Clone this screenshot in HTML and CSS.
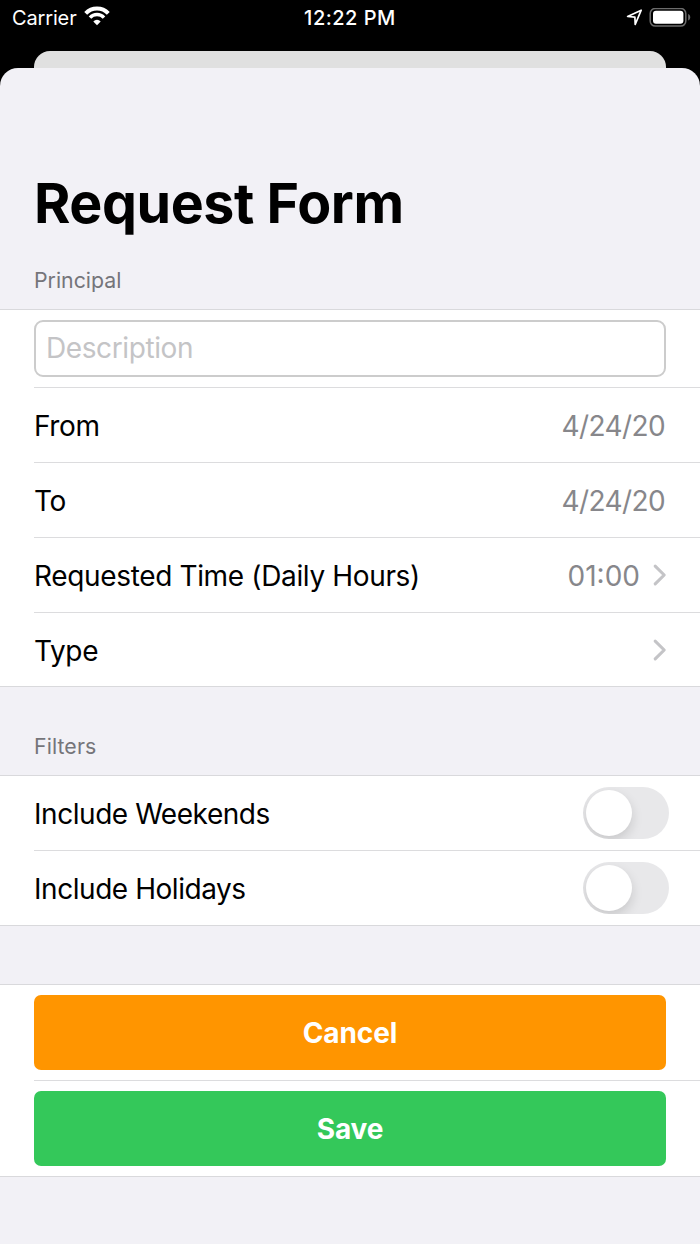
FILE: index.html
```html
<!DOCTYPE html>
<html lang="en">
<head>
<meta charset="utf-8">
<title>Request Form</title>
<link rel="stylesheet" href="styles.css">
</head>
<body>
<header class="status">
  <div class="status-left">
    <span class="carrier">Carrier</span>
    <svg class="wifi" width="26" height="20" viewBox="0 0 26 20">
      <path d="M1.700 7.300a15.600 15.600 0 0 1 22.600 0" fill="none" stroke="#fff" stroke-width="4"/>
      <path d="M6 11.600a9.700 9.700 0 0 1 14 0" fill="none" stroke="#fff" stroke-width="3.500"/>
      <path d="M13 19.200l-3.700-3.800a5.200 5.200 0 0 1 7.400 0z" fill="#fff"/>
    </svg>
  </div>
  <span class="clock">12:22 PM</span>
  <div class="status-right">
    <svg width="17" height="17" viewBox="0 0 17 17"><path d="M15.200 1.200L1.600 7.500l7.300.7.300 7.300z" fill="none" stroke="#fff" stroke-width="1.700" stroke-linejoin="round"/></svg>
    <svg width="42" height="20" viewBox="0 0 42 20">
      <rect x="1.200" y=".5" width="35.600" height="17.600" rx="5" fill="none" stroke="#6c6c6c" stroke-width="1.500"/>
      <rect x="4" y="2.800" width="30.400" height="13" rx="3" fill="#fff"/>
      <path d="M39.200 6.100c1.300.5 2 1.600 2 3.100s-.7 2.700-2 3.200z" fill="#6c6c6c"/>
    </svg>
  </div>
</header>
<div class="behind"></div>
<main class="sheet">
  <h1 class="title">Request Form</h1>
  <h2 class="section-label">Principal</h2>
  <section class="group">
    <div class="row row-field"><input class="field" type="text" placeholder="Description"></div>
    <div class="row"><span>From</span><span class="value date">4/24/20</span></div>
    <div class="row"><span>To</span><span class="value date">4/24/20</span></div>
    <div class="row"><span>Requested Time (Daily Hours)</span><span class="value">01:00</span>
      <svg class="chevron" width="14" height="22" viewBox="0 0 14 22"><path d="M2.200 2.200L11.200 11l-9 8.800" fill="none" stroke="#c4c4c7" stroke-width="3.100" stroke-linecap="round" stroke-linejoin="round"/></svg></div>
    <div class="row"><span>Type</span>
      <svg class="chevron lone" width="14" height="22" viewBox="0 0 14 22"><path d="M2.200 2.200L11.200 11l-9 8.800" fill="none" stroke="#c4c4c7" stroke-width="3.100" stroke-linecap="round" stroke-linejoin="round"/></svg></div>
  </section>
  <h2 class="section-label filters">Filters</h2>
  <section class="group">
    <div class="row row-switch"><span>Include Weekends</span><span class="switch"><span class="knob"></span></span></div>
    <div class="row row-switch"><span>Include Holidays</span><span class="switch"><span class="knob"></span></span></div>
  </section>
  <section class="group actions">
    <div class="row row-button"><button class="button cancel">Cancel</button></div>
    <div class="row row-button"><button class="button save">Save</button></div>
  </section>
</main>
</body>
</html>
```
FILE: styles.css
```css
* { box-sizing: border-box; }
body {
  margin: 0;
  height: 1244px;
  overflow: hidden;
  background: #000;
  font-family: Inter, "Liberation Sans", sans-serif;
  font-size: 28px;
  color: #000;
  display: flex;
  flex-direction: column;
}
.status {
  height: 51px;
  flex: none;
  padding: 5px 9px 0 12px;
  display: grid;
  grid-template-columns: 1fr auto 1fr;
  align-items: start;
  color: #fff;
  font-size: 20px;
  line-height: 26px;
}
.status-left, .status-right { display: flex; }
.status-left { gap: 7px; }
.carrier { letter-spacing: -0.15px; }
.wifi { margin-top: 1px; }
.status-right { justify-content: flex-end; gap: 6px; padding-top: 3px; }
.status-right svg:first-child { margin-top: 1px; }
.clock { font-weight: 500; letter-spacing: 0.5px; margin-right: 3px; }
.behind {
  flex: none;
  height: 17px;
  margin: 0 34px;
  background: #e0e0e0;
  border-radius: 16px 16px 0 0;
}
.sheet {
  flex: 1;
  background: #f2f1f6;
  border-radius: 18px 18px 0 0;
  padding-top: 100px;
}
.title {
  margin: 0 0 0 34px;
  height: 70px;
  line-height: 70px;
  font-size: 55.5px;
  font-weight: 700;
  letter-spacing: -0.42px;
}
.section-label {
  margin: 0;
  padding: 28px 0 0 34px;
  height: 71px;
  line-height: 28px;
  font-size: 21.3px;
  font-weight: 400;
  color: #75757a;
}
.filters { height: 88px; padding-top: 45px; letter-spacing: 0.1px; }
.group {
  background: #fff;
  border-top: 1px solid #d9d9dc;
  border-bottom: 1px solid #d9d9dc;
  padding-left: 34px;
}
.row {
  height: 75px;
  padding-right: 34px;
  display: flex;
  align-items: center;
  border-bottom: 1px solid #dcdcde;
  line-height: 36px;
  padding-top: 2px;
  letter-spacing: -0.35px;
}
.row:last-child { border-bottom: 0; height: 73px; }
.row-field { height: 78px; padding: 0 34px 1px 0; }
.field {
  width: 100%;
  height: 57px;
  padding: 0 10px 1px;
  border: 2px solid #ccc;
  border-radius: 9px;
  background: #fff;
  font: inherit;
  letter-spacing: -0.4px;
  outline: 0;
}
.field::placeholder { color: #c4c4c6; opacity: 1; }
.value { margin-left: auto; color: #87878b; letter-spacing: 0; }
.date { letter-spacing: -0.6px; margin-right: 1px; }
.chevron { margin: -2px -1px 0 13px; }
.lone { margin-left: auto; }
.row-switch { padding-right: 31px; letter-spacing: -0.45px; }
.row-switch:last-child { height: 74px; }
.switch {
  margin: -2px 0 0 auto;
  width: 86px;
  height: 52px;
  border-radius: 26px;
  background: #e8e8ea;
  padding: 3px;
  overflow: hidden;
}
.knob {
  display: block;
  width: 46px;
  height: 46px;
  border-radius: 50%;
  background: #fff;
  box-shadow: 0 5px 12px rgba(0, 0, 0, .14);
}
.actions { margin-top: 58px; }
.row-button { height: 96px; padding-top: 0; }
.row-button:last-child { height: 95px; }
.button {
  width: 100%;
  height: 75px;
  border: 0;
  border-radius: 7px;
  padding: 0;
  font: inherit;
  font-weight: 700;
  letter-spacing: -0.1px;
  color: #fff;
}
.cancel { background: #ff9500; }
.save { background: #34c85a; }
```
